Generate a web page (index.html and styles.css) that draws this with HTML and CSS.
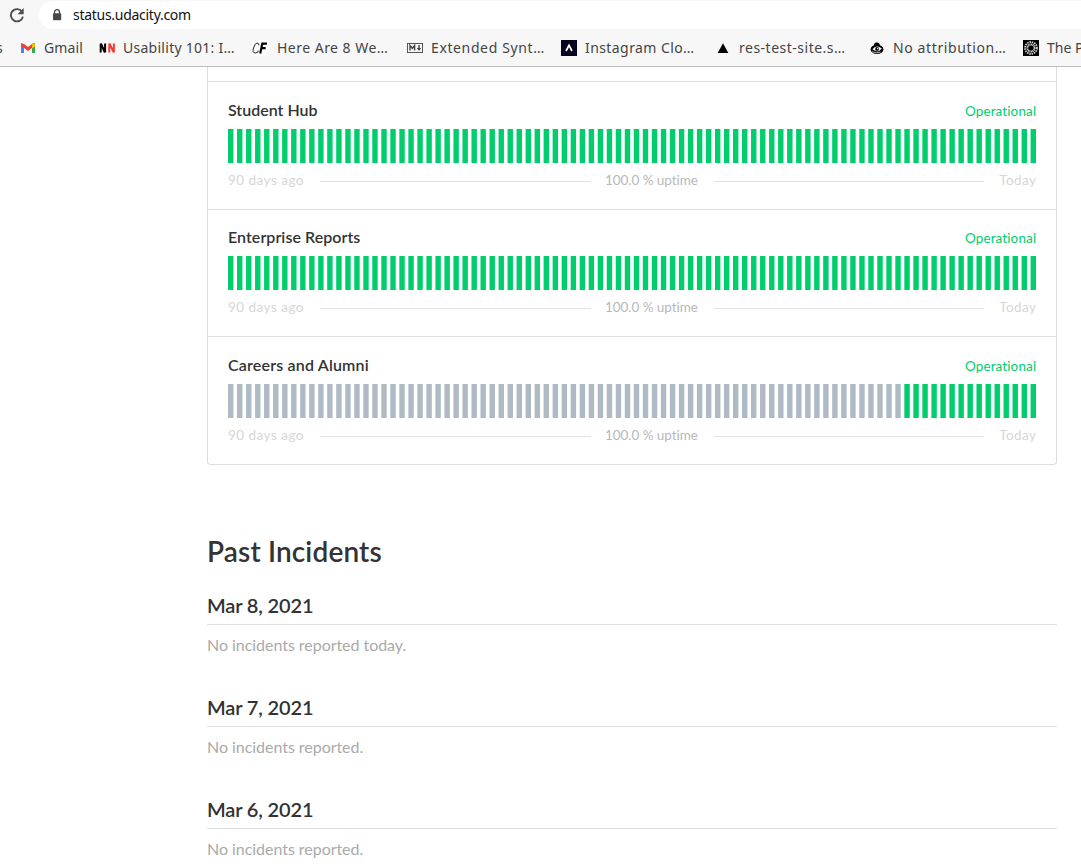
FILE: index.html
```html
<!DOCTYPE html>
<html lang="en">
<head>
<meta charset="utf-8">
<title>Udacity Status</title>
<link rel="stylesheet" href="styles.css">
</head>
<body>
<header class="browser">
  <div class="address-row">
    <svg class="reload" viewBox="0 0 16 16" width="16" height="16"><path d="M13.2 5.1A6.1 6.1 0 1 0 13.9 9.6" fill="none" stroke="#4a4d51" stroke-width="1.9"/><path d="M14.7 1v6.2H8.5z" fill="#4a4d51"/></svg>
    <div class="address">
      <svg class="lock" viewBox="0 0 10 12" width="10" height="12"><path d="M2.5 5V3.2a2.5 2.5 0 0 1 5 0V5" fill="none" stroke="#484848" stroke-width="1.3"/><rect x="1" y="4.3" width="8.2" height="7" rx="1" fill="#484848"/></svg>
      <span class="url">status.udacity.com</span>
    </div>
  </div>
  <nav class="bookmarks">
    <span class="mark m0"><span class="fit">s</span></span>
    <span class="mark m1"><svg viewBox="0 0 16 16" width="16" height="16"><path d="M1 4v9h3V6z" fill="#4285f4"/><path d="M12 6v7h3V4z" fill="#34a853"/><path d="M1 3l3 1 4 3 4-3 1-1 2 .2v2.3L8 11 1 5.8z" fill="#ea4335"/><path d="M12 4l1.4-1q1.6 0 1.6 1.5v2L12 8.6z" fill="#fbbc04"/></svg><span class="fit">Gmail</span></span>
    <span class="mark m2"><svg viewBox="0 0 16 16" width="16" height="16"><path d="M1.7 12.5v-9M6.1 12.5v-9M1.9 3.5l4 9" stroke="#000" stroke-width="2"/><path d="M10.3 12.5v-9M14.9 12.5v-9M10.5 3.5l4.3 9" stroke="#f43b2f" stroke-width="2"/></svg><span class="fit">Usability 101: I…</span></span>
    <span class="mark m3"><svg viewBox="0 0 16 16" width="16" height="16"><path fill="#fff" d="M0 0h16v16H0z"/><path d="M7 5.4Q7 3 5 3T1.5 8t1.8 5 3-2.5" fill="none" stroke="#222"/><path d="M8.2 13.5L10.3 3.7H15M9.5 8.2h4.2" fill="none" stroke="#000" stroke-width="2.2"/></svg><span class="fit">Here Are 8 We…</span></span>
    <span class="mark m4"><svg viewBox="0 0 16 16" width="16" height="16"><rect x=".5" y="3.5" width="15" height="9" fill="none" stroke="#555"/><path d="M3 10.5v-5l2.3 2.8 2.3-2.8v5" fill="none" stroke="#444" stroke-width="1.4"/><path d="M12 5v4" stroke="#444" stroke-width="1.4"/><path d="M9.8 8h4.4L12 10.9z" fill="#444"/></svg><span class="fit">Extended Synt…</span></span>
    <span class="mark m5"><svg viewBox="0 0 16 16" width="16" height="16"><path fill="#04031f" d="M0 0h16v16H0z"/><path d="M5 11l3-5.6L11 11" fill="none" stroke="#fff" stroke-width="1.7"/></svg><span class="fit">Instagram Clo…</span></span>
    <span class="mark m6"><svg viewBox="0 0 16 16" width="16" height="16"><path d="M8 3.2l5.3 9.8H2.7z"/></svg><span class="fit">res-test-site.s…</span></span>
    <span class="mark m7"><svg viewBox="0 0 16 16" width="16" height="16"><path d="M4.8 5.8Q5.2 2.2 8.2 2.6q2.6.3 2.8 3.2l-3-.8z"/><ellipse cx="8" cy="9.4" rx="6.4" ry="4.7"/><path d="M3.4 9.3Q7.4 4.2 12.8 8.6 9 13.8 3.4 9.3z" fill="#f7f7f7"/><circle cx="8.1" cy="9" r="1.9"/><circle cx="8.6" cy="8.5" r=".7" fill="#fff"/><path d="M3 11.6q4 2.4 8.6.5" fill="none" stroke="#f7f7f7" stroke-width=".7"/></svg><span class="fit">No attribution…</span></span>
    <span class="mark m8"><svg viewBox="0 0 16 16" width="16" height="16"><path d="M0 0h16v16H0z"/><g fill="none" stroke="#ccc"><circle cx="8" cy="8" r="6" stroke-width="1.8" stroke-dasharray="1.55 .81"/><circle cx="8" cy="8" r="3.6" stroke-width="2" stroke-dasharray="1.1 .4"/></g></svg><span class="fit">The Podcast</span></span>
  </nav>
</header>
<main class="page">
  <section class="components">
    <div class="stub"></div>
    <article class="component">
      <div class="head"><h3 class="name n1">Student Hub</h3><span class="state">Operational</span></div>
      <svg class="bars" data-empty="0" viewBox="0 0 448 34" preserveAspectRatio="none"></svg>
      <div class="legend"><span class="ago">90 days ago</span><i></i><span class="uptime">100.0 % uptime</span><i></i><span class="today">Today</span></div>
    </article>
    <article class="component tight">
      <div class="head"><h3 class="name n2">Enterprise Reports</h3><span class="state">Operational</span></div>
      <svg class="bars" data-empty="0" viewBox="0 0 448 34" preserveAspectRatio="none"></svg>
      <div class="legend"><span class="ago">90 days ago</span><i></i><span class="uptime">100.0 % uptime</span><i></i><span class="today">Today</span></div>
    </article>
    <article class="component">
      <div class="head"><h3 class="name n3">Careers and Alumni</h3><span class="state">Operational</span></div>
      <svg class="bars" data-empty="75" viewBox="0 0 448 34" preserveAspectRatio="none"></svg>
      <div class="legend"><span class="ago">90 days ago</span><i></i><span class="uptime">100.0 % uptime</span><i></i><span class="today">Today</span></div>
    </article>
  </section>
  <section class="incidents">
    <h2 class="title">Past Incidents</h2>
    <article class="day"><h3 class="date">Mar 8, 2021</h3><p class="note">No incidents reported today.</p></article>
    <article class="day"><h3 class="date">Mar 7, 2021</h3><p class="note">No incidents reported.</p></article>
    <article class="day"><h3 class="date">Mar 6, 2021</h3><p class="note">No incidents reported.</p></article>
  </section>
</main>
<script src="bars.js"></script>
</body>
</html>
```
FILE: styles.css
```css
* { box-sizing: border-box; }
body { margin: 0; height: 867px; overflow: hidden; background: #fff; font-family: Lato, "Liberation Sans", sans-serif; color: #333; }
h2, h3, p { margin: 0; }

.browser { height: 67px; background: #f7f7f7; border-bottom: 1px solid #bdbdbd; font-family: "Noto Sans", "Open Sans", sans-serif; overflow: hidden; }
.address-row { display: flex; height: 30px; padding: 1px 0 1px 9px; }
.reload { flex: none; margin: 6px 14px 0 0; }
.address { flex: 1; display: flex; align-items: center; height: 28px; padding-left: 13px; background: #fff; border-radius: 14px 0 0 14px; }
.lock { margin-right: 11px; }
.url { padding-bottom: 2px; font-size: 14px; letter-spacing: -.28px; color: #111; }

.bookmarks { display: grid; grid-template-columns: 20px 79px 153px 155px 154px 154px 154px 154px 150px; height: 36px; align-items: center; }
.mark { display: flex; align-items: center; gap: 8px; white-space: nowrap; font-size: 14px; color: #444; }
.mark svg { flex: none; }
.fit { padding-bottom: 2px; }
.m0 { margin-left: -4px; }
.m1 { letter-spacing: .1px; }
.m2 { letter-spacing: .27px; }
.m3 { gap: 9px; letter-spacing: .48px; }
.m4 { letter-spacing: .62px; }
.m5 { letter-spacing: .42px; }
.m6 { letter-spacing: .5px; }
.m7 { letter-spacing: .62px; }

.page { width: 850px; margin-left: 207px; }
.components { border: 1px solid #ddd; border-top: 0; border-radius: 0 0 4px 4px; }
.stub { height: 14px; }
.component { height: 128px; padding: 19px 20px 0; border-top: 1px solid #ddd; }
.component.tight { height: 127px; padding-top: 18px; }
.head { display: flex; justify-content: space-between; height: 28px; line-height: 20px; }
.name { font-size: 16px; font-weight: 600; line-height: 18px; }
.n2 { letter-spacing: .05px; }
.n3 { letter-spacing: .18px; }
.state { margin-right: -.2px; font-size: 13.5px; letter-spacing: .12px; line-height: 21px; color: #00ce6c; }
.bars { display: block; width: 808px; height: 34px; }
.legend { display: grid; grid-template-columns: 76px 271px 94px 270px 1fr; column-gap: 0; align-items: center; height: 20px; margin-top: 7px; font-size: 13.5px; color: #d6d6d6; white-space: nowrap; }
.legend { grid-template-columns: 92px 271px 14px 94px 15px 270px 1fr; }
.legend i { height: 1px; margin-top: 2px; background: #e0e0e0; }
.ago { letter-spacing: .48px; }
.uptime { grid-column: 4; letter-spacing: -.05px; color: #b8b8b8; }
.uptime + i { grid-column: 6; }
.today { letter-spacing: .4px; text-align: right; margin-right: -.4px; }

.incidents { padding-top: 69px; }
.title { font-size: 28px; line-height: 34px; font-weight: 600; letter-spacing: .15px; }
.day { height: 102px; }
.title + .day { margin-top: 24px; }
.date { height: 33px; line-height: 27px; font-size: 20px; font-weight: 600; letter-spacing: -.15px; border-bottom: 1px solid #ddd; }
.note { margin-top: 8px; line-height: 24px; font-size: 16px; letter-spacing: -.04px; color: #aaa; }
```
FILE: bars.js
```js
document.querySelectorAll('.bars').forEach(function (chart) {
  var empty = Number(chart.dataset.empty);
  for (var day = 0; day < 90; day++) {
    var bar = document.createElementNS('http://www.w3.org/2000/svg', 'rect');
    bar.setAttribute('x', day * 5);
    bar.setAttribute('width', 3);
    bar.setAttribute('height', 34);
    bar.setAttribute('fill', day < empty ? '#b0bac5' : '#00ce6c');
    chart.appendChild(bar);
  }
});
```
